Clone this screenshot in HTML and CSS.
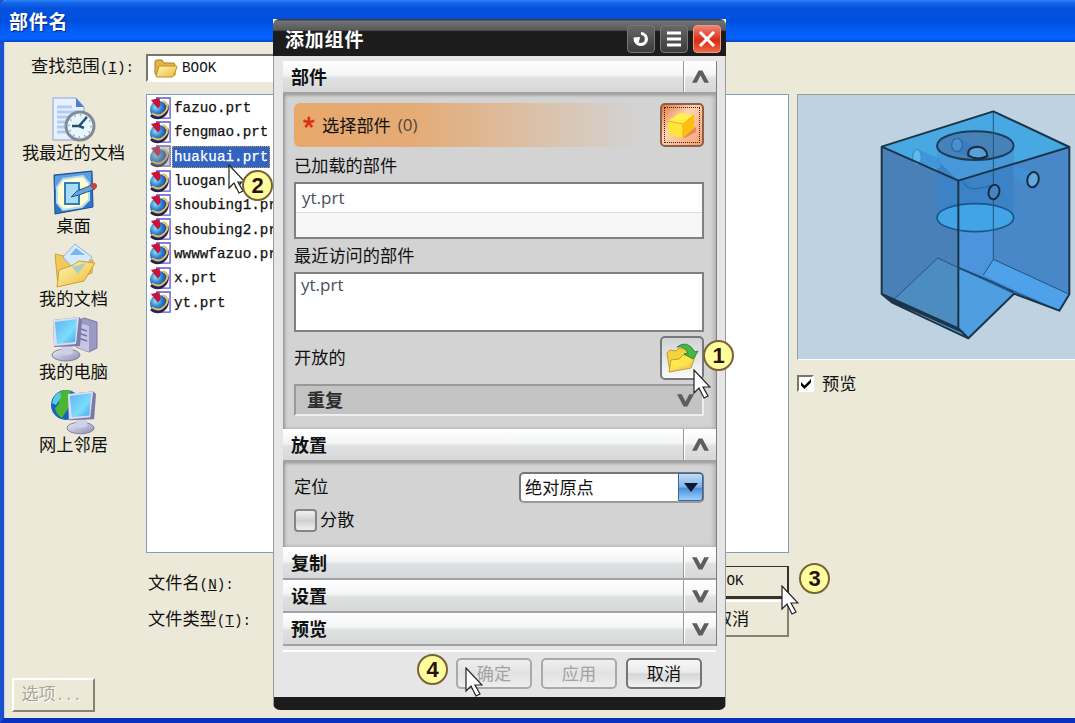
FILE: index.html
```html
<!DOCTYPE html>
<html lang="zh-CN">
<head>
    <meta charset="UTF-8">
    <meta name="viewport" content="width=device-width, initial-scale=1.0">
    <title>部件名</title>
    <link rel="stylesheet" href="styles.css">
</head>
<body>

    <!-- Shared symbols -->
    <svg class="defs" width="0" height="0">
        <defs>
            <radialGradient id="ball" cx=".35" cy=".35" r=".75">
                <stop offset="0" stop-color="#9ae8ff"/>
                <stop offset=".45" stop-color="#2a86d0"/>
                <stop offset="1" stop-color="#10246c"/>
            </radialGradient>
            <linearGradient id="folder" x1="0" y1="0" x2="1" y2="1">
                <stop offset="0" stop-color="#fff6b0"/>
                <stop offset="1" stop-color="#eebb3c"/>
            </linearGradient>
            <linearGradient id="screen" x1="0" y1="0" x2="1" y2="1">
                <stop offset="0" stop-color="#5ab4f4"/>
                <stop offset=".6" stop-color="#7ddcfc"/>
                <stop offset="1" stop-color="#3f9fe6"/>
            </linearGradient>
            <linearGradient id="metal" x1="0" y1="0" x2="1" y2="1">
                <stop offset="0" stop-color="#f0f0fa"/>
                <stop offset="1" stop-color="#8a8ab4"/>
            </linearGradient>
            <symbol id="prt" viewBox="0 0 24 24">
                <path d="M8 1h14v21H8z" fill="#fff" stroke="#5b55d8" stroke-width="1.4"/>
                <circle cx="10" cy="13" r="9" fill="url(#ball)"/>
                <path d="M2 19c4 4 10 4 14 0 3-3 4-7 3-11" fill="none" stroke="#25234a" stroke-width="2.500"/>
                <path d="M3 17c5 3 9 3 12 0 4-3 5-7 3-11l-4-2" fill="none" stroke="#eebc5c" stroke-width="2"/>
                <path d="M2 3l9-2 1 8-3 3z" fill="#c8143c"/>
            </symbol>
            <symbol id="cursor" viewBox="0 0 18 30">
                <path d="M1 1v23l5-5 5 10 4-2-5-9h7z" fill="#fff" stroke="#222" stroke-width="1.200"/>
            </symbol>
            <symbol id="monitor" viewBox="0 0 32 46">
                <ellipse cx="15" cy="39" rx="14" ry="6" fill="url(#metal)" stroke="#8080a4"/>
                <path d="M11 26h10l1 11q-6 4-12 0z" fill="#cfcfe8"/>
                <path d="M2 4l26-3 3 3-2 26-26 1z" fill="#7b7ba8"/>
                <path d="M2 4l26-3-3 27-22 2z" fill="#dcdcf0"/>
                <path d="M4 6l22-3-2 23-18 2z" fill="url(#screen)"/>
            </symbol>
        </defs>
    </svg>

    <!-- File open window -->
    <div class="window">
        <div class="window-title">部件名</div>
        <div class="client">
            <div class="lookup">
                <label>查找范围<span class="mono">(<u>I</u>):</span></label>
                <div class="lookup-combo">
                    <svg width="24" height="20" viewBox="0 0 24 20">
                        <path d="M1 4q0-2 2-2h5l2 3h9q2 0 2 2v10H3q-2 0-2-2z" fill="#e6b344" stroke="#a8801c"/>
                        <path d="M5 8h17q1 0 1 1l-3 8q-1 2-2 2H3q-1 0-1-1z" fill="url(#folder)" stroke="#b98f28"/>
                    </svg>
                    <span class="mono">BOOK</span>
                </div>
            </div>

            <div class="main">
                <div class="places">
                    <div class="place">
                        <svg width="48" height="46" viewBox="0 0 48 46">
                            <path d="M3 1h23l8 9v33H3z" fill="#e6f0ff" stroke="#8ba4cc"/>
                            <path d="M26 1v9h8z" fill="#4c7ed6"/>
                            <path d="M7 10h15M7 15h20M7 20h15M7 25h10M7 30h10M7 35h14" stroke="#b4ccf0" stroke-width="3"/>
                            <circle cx="30" cy="29" r="14" fill="#e6f6fc" stroke="#828a94" stroke-width="3"/>
                            <circle cx="30" cy="29" r="11" fill="none" stroke="#9cb8cc" stroke-width="2" stroke-dasharray="1.5 4.2"/>
                            <path d="M37 20l-8 9h-7M29 29l5 2" fill="none" stroke="#26506c" stroke-width="2.500"/>
                        </svg>
                        <span>我最近的文档</span>
                    </div>
                    <div class="place">
                        <svg width="48" height="46" viewBox="0 0 48 46">
                            <path d="M4 5l38-4 1 36-38 7z" fill="#2c76c8" stroke="#1c4c92"/>
                            <path d="M5 6l36-4v12L5 19z" fill="#7dbcf2" opacity=".6"/>
                            <path d="M13 9l20-3 6 7v17l-7 7-19 3-6-7V17z" fill="#fffdd2" stroke="#b8dce8" stroke-width="2"/>
                            <path d="M15 13h14v21H15z" fill="#a8dcf6" stroke="#357cb8" stroke-width="2"/>
                            <path d="M21 27l6-6 15-6 3 4-16 6z" fill="#66a6dc" stroke="#24558e"/>
                            <circle cx="44" cy="16" r="3" fill="#c84434"/>
                        </svg>
                        <span>桌面</span>
                    </div>
                    <div class="place">
                        <svg width="48" height="46" viewBox="0 0 48 46">
                            <path d="M5 11l9 2 12 5 17-1-1 13L8 43z" fill="#f0c85c" stroke="#d0a23c"/>
                            <path d="M13 14L25 1l17 13-13 18z" fill="#d4eaff" stroke="#8fb2dc"/>
                            <path d="M20 12l6-7 9 7z" fill="#7cb6ee"/>
                            <path d="M7 44l2-17 14-5 6-4 16 2-11 18z" fill="url(#folder)" stroke="#ce9e34"/>
                            <path d="M22 24l14-4-8 11z" fill="#96ccdc" opacity=".8"/>
                        </svg>
                        <span>我的文档</span>
                    </div>
                    <div class="place">
                        <svg width="48" height="46" viewBox="0 0 48 46">
                            <path d="M26 6l8-4 13 4v26l-8 4-13-5z" fill="#9a9ac4" stroke="#7878a4"/>
                            <path d="M26 6l13 4v26l-13-5z" fill="#c6c6e2"/>
                            <path d="M28 12l9 3M28 17l9 3M28 22l9 3" stroke="#7676a0" stroke-width="1.500"/>
                            <use href="#monitor" x="1" y="0" width="32" height="46"/>
                        </svg>
                        <span>我的电脑</span>
                    </div>
                    <div class="place">
                        <svg width="48" height="46" viewBox="0 0 48 46">
                            <circle cx="16" cy="16" r="15" fill="#1c62bc"/>
                            <path d="M7 5q8-6 14-3l-3 6 4 5-5 8-5 8q-6-4-7-10l4-4z" fill="#4cb634"/>
                            <path d="M2 14q2-9 8-11l1 5-5 8z" fill="#57cce4"/>
                            <use href="#monitor" x="16" y="1" width="31" height="45"/>
                        </svg>
                        <span>网上邻居</span>
                    </div>
                </div>

                <div class="file-list mono">
                    <div class="file"><svg><use href="#prt"/></svg><span>fazuo.prt</span></div>
                    <div class="file"><svg><use href="#prt"/></svg><span>fengmao.prt</span></div>
                    <div class="file selected"><svg><use href="#prt"/></svg><span>huakuai.prt</span></div>
                    <div class="file"><svg><use href="#prt"/></svg><span>luogan.prt</span></div>
                    <div class="file"><svg><use href="#prt"/></svg><span>shoubing1.prt</span></div>
                    <div class="file"><svg><use href="#prt"/></svg><span>shoubing2.prt</span></div>
                    <div class="file"><svg><use href="#prt"/></svg><span>wwwwfazuo.prt</span></div>
                    <div class="file"><svg><use href="#prt"/></svg><span>x.prt</span></div>
                    <div class="file"><svg><use href="#prt"/></svg><span>yt.prt</span></div>
                </div>

                <div class="preview">
                    <div class="preview-box">
                        <svg width="278" height="264" viewBox="0 0 278 264">
                            <g transform="translate(62 -10) scale(.33333)" stroke-linejoin="round">
                                <!-- block faces -->
                                <path d="M65 185L295 287 628 186V628L598 677 462 626 325 760 65 627z" fill="#4a8fd6"/>
                                <path d="M65 185L295 287V730L65 627z" fill="#4a80b8"/>
                                <path d="M295 287L628 186V628L400 523 370 570 295 548z" fill="#4888c8"/>
                                <path d="M295 290L400 260V523L370 570 295 545z" fill="#4c94dc"/>
                                <path d="M65 185L400 79 628 186 295 287z" fill="#48a8e2"/>
                                <path d="M233 519L462 626 325 760 100 645z" fill="#4e9ee0"/>
                                <path d="M233 519L295 545V730L100 645z" fill="#4c8cc0"/>
                                <path d="M400 523L628 628 598 677 370 570z" fill="#4ea2ea"/>
                                <!-- bore -->
                                <path d="M231 185V398H461V185z" fill="#3c82c6"/>
                                <path d="M231 225L295 287 461 237V185H231z" fill="#4698d8"/>
                                <ellipse cx="346" cy="182" rx="115" ry="43" fill="#4681b8" stroke="#1c3c5c" stroke-width="6"/>
                                <ellipse cx="346" cy="398" rx="115" ry="42" fill="#40a4e6" stroke="#1c5688" stroke-width="5"/>
                                <path d="M400 79V523L370 570M400 523L628 628M100 645L233 519 462 626" fill="none" stroke="#20527e" stroke-width="3"/>
                                <path d="M295 548L598 677" stroke="#20527e" stroke-width="3"/>
                                <!-- side holes -->
                                <path d="M172 193L240 222V250L168 238z" fill="#3f96da"/>
                                <ellipse cx="171" cy="216" rx="13" ry="23" fill="#62b8e8" stroke="#3a90cc" stroke-width="4"/>
                                <path d="M292 158L355 188 325 212 285 200z" fill="#397cc0"/>
                                <ellipse cx="291" cy="180" rx="16" ry="20" fill="#4a90d0" stroke="#2a6cac" stroke-width="4"/>
                                <path d="M325 212q-5-25 28-27 28 3 29 28-28 15-57-1z" fill="#58a0d6" stroke="#1a2c3c" stroke-width="6"/>
                                <path d="M310 290q10 26 48 20l42-10" fill="none" stroke="#2a6eb0" stroke-width="4"/>
                                <path d="M461 245L520 262 508 300 461 276z" fill="#4090d4"/>
                                <ellipse cx="402" cy="321" rx="16" ry="22" fill="#4684c0" stroke="#182c40" stroke-width="6" transform="rotate(14 402 321)"/>
                                <ellipse cx="519" cy="284" rx="17" ry="23" fill="#62aade" stroke="#182c40" stroke-width="6" transform="rotate(14 519 284)"/>
                                <!-- outline -->
                                <path d="M65 185L400 79 628 186 295 287zM65 185V627L295 730V287M628 186V628L598 677 462 626 325 760 295 730M65 627L95 652 325 760M80 640L310 742" fill="none" stroke="#1c3448" stroke-width="6"/>
                                <path d="M295 548L400 592 462 622" fill="none" stroke="#1c4870" stroke-width="5"/>
                            </g>
                        </svg>
                    </div>
                    <label class="preview-check">
                        <span class="classic-check">
                            <svg width="12" height="12" viewBox="0 0 12 12"><path d="M1 4l3.500 3.500L11 1v3.500L4.500 11 1 7.500z" fill="#000"/></svg>
                        </span>
                        预览
                    </label>
                </div>
            </div>

            <div class="bottom">
                <div class="fields">
                    <label>文件名<span class="mono">(<u>N</u>):</span></label>
                    <label>文件类型<span class="mono">(<u>T</u>):</span></label>
                </div>
                <div class="actions">
                    <button class="classic default mono">OK</button>
                    <button class="classic">取消</button>
                </div>
            </div>
            <button class="classic options" disabled>选项<span class="mono">...</span></button>
        </div>
    </div>

    <!-- Add component dialog -->
    <div class="dialog-corners"></div>
    <div class="dialog">
        <div class="dialog-title">
            <span>添加组件</span>
            <div class="title-buttons">
                <i><svg width="20" height="20" viewBox="0 0 20 20"><path d="M10 4.500a5.500 5.500 0 1 1-5.500 6.500" fill="none" stroke="#fff" stroke-width="3.200"/><path d="M2.500 8.500l6.500-.5-1 5H3z" fill="#fff"/></svg></i>
                <i><svg width="20" height="20" viewBox="0 0 20 20"><path d="M3 4h14M3 10h14M3 16h14" stroke="#fff" stroke-width="3"/></svg></i>
                <i class="close"><svg width="20" height="20" viewBox="0 0 20 20"><path d="M3 3l14 14M17 3L3 17" stroke="#fff" stroke-width="3"/></svg></i>
            </div>
        </div>

        <div class="sections">
            <div class="section-head"><span>部件</span><b><svg class="chev" viewBox="0 0 18 14"><path d="M0 13L7 0h4l7 13h-5L9 5.500 5 13z"/></svg></b></div>
            <div class="section-body parts">
                <div class="select-row">
                    <div class="select-label"><em>*</em>选择部件<span class="latin">(0)</span></div>
                    <div class="tool active">
                        <svg width="34" height="34" viewBox="0 0 34 34">
                            <path d="M17 27l14-8v5l-11 6z" fill="#d8642c" opacity=".55"/>
                            <path d="M3 13l15 3v14L4 27z" fill="#ffe43c"/>
                            <path d="M3 13L15 5l14 2-11 9z" fill="#fff04c"/>
                            <path d="M18 16l11-9v13L18 30z" fill="#ffbe10"/>
                            <path d="M3 13l15 3 11-9M18 16v14" fill="none" stroke="#f6ae14"/>
                        </svg>
                    </div>
                </div>
                <div class="label loaded-label">已加载的部件</div>
                <div class="list-box loaded latin"><div>yt.prt</div></div>
                <div class="label recent-label">最近访问的部件</div>
                <div class="list-box recent latin">yt.prt</div>
                <div class="open-row">
                    <span>开放的</span>
                    <div class="tool">
                        <svg width="34" height="34" viewBox="0 0 34 34">
                            <path d="M2 12l3-3 6 1 3-3 14 3-2 14L5 31z" fill="#f2d33a" stroke="#c69a20"/>
                            <path d="M4 31l2-12 8-1 4-4 13-1-5 14z" fill="url(#folder)" stroke="#c8a018"/>
                            <path d="M5 28l3-8 7-1 4-4 10-1-5 10z" fill="#ffe838" opacity=".8"/>
                            <path d="M12 6q10-8 18 5l3-1-5 8-9-5 4-1q-4-8-11-6z" fill="#46b848" stroke="#2c8a38"/>
                        </svg>
                    </div>
                </div>
                <div class="repeat"><span>重复</span><svg class="chev" viewBox="0 0 18 14"><path d="M0 1l7 13h4l7-13h-5L9 8.500 5 1z"/></svg></div>
            </div>

            <div class="section-head"><span>放置</span><b><svg class="chev" viewBox="0 0 18 14"><path d="M0 13L7 0h4l7 13h-5L9 5.500 5 13z"/></svg></b></div>
            <div class="section-body placement">
                <div class="position-row">
                    <span>定位</span>
                    <div class="combo">
                        <span>绝对原点</span>
                        <i><svg width="14" height="9" viewBox="0 0 14 9"><path d="M0 0h14L7 9z" fill="#0c1830"/></svg></i>
                    </div>
                </div>
                <div class="scatter"><i></i><span>分散</span></div>
            </div>

            <div class="section-head"><span>复制</span><b><svg class="chev" viewBox="0 0 18 14"><path d="M0 1l7 13h4l7-13h-5L9 8.500 5 1z"/></svg></b></div>
            <div class="section-head"><span>设置</span><b><svg class="chev" viewBox="0 0 18 14"><path d="M0 1l7 13h4l7-13h-5L9 8.500 5 1z"/></svg></b></div>
            <div class="section-head"><span>预览</span><b><svg class="chev" viewBox="0 0 18 14"><path d="M0 1l7 13h4l7-13h-5L9 8.500 5 1z"/></svg></b></div>
        </div>

        <div class="dialog-footer">
            <button class="nx" disabled>确定</button>
            <button class="nx" disabled>应用</button>
            <button class="nx">取消</button>
        </div>
    </div>

    <!-- Step markers and pointers -->
    <svg class="pointer p1"><use href="#cursor"/></svg>
    <svg class="pointer p2"><use href="#cursor"/></svg>
    <svg class="pointer p3"><use href="#cursor"/></svg>
    <svg class="pointer p4"><use href="#cursor"/></svg>
    <div class="step s1">1</div>
    <div class="step s2">2</div>
    <div class="step s3">3</div>
    <div class="step s4">4</div>

</body>
</html>
```
FILE: styles.css
```css
* {
    box-sizing: border-box;
}
body {
    margin: 0;
    width: 1075px;
    height: 723px;
    overflow: hidden;
    position: relative;
    font-family: "Noto Sans CJK SC", sans-serif;
    font-size: 17.2px;
    line-height: 20px;
    color: #111;
}
svg {
    display: block;
    flex: none;
}
button {
    font-family: inherit;
    font-size: inherit;
    line-height: inherit;
    color: inherit;
    padding: 0 0 2px;
}
.defs {
    position: absolute;
}
.mono {
    font-family: "Liberation Mono", "Noto Sans CJK SC", monospace;
    font-size: 14.3px;
}
.latin {
    font-family: "Open Sans", "Noto Sans CJK SC", sans-serif;
    font-size: 17px;
}

/* File open window */
.window {
    height: 723px;
    display: flex;
    flex-direction: column;
    background: #ece9d8;
    border-left: 4px solid #1c50cc;
    border-bottom: 5px solid #0831c0;
}
.window-title {
    height: 42px;
    margin-left: -4px;
    padding: 11px 0 0 9px;
    background: linear-gradient(#2f86f4 0, #1668ec 6%, #0452dc 20%, #0050e0 50%, #0560fa 80%, #0660fc 92%, #0048c8 100%);
    border-radius: 6px 0 0 0;
    color: #fff;
    font-size: 19px;
    font-weight: bold;
    letter-spacing: .8px;
    text-shadow: 1px 1px 1px #0a2a80;
}
.client {
    flex: 1;
    display: flex;
    flex-direction: column;
    border-left: 1px solid #b9d2f2;
}
.lookup {
    height: 52px;
    display: flex;
    align-items: flex-start;
    padding-top: 12px;
}
.lookup label {
    width: 141px;
    padding: 1px 0 0 26px;
    white-space: nowrap;
}
.lookup-combo {
    width: 500px;
    height: 28px;
    display: flex;
    align-items: center;
    gap: 4px;
    padding-left: 6px;
    background: #fff;
    border: 2px solid;
    border-color: #77766c #fff #fff #77766c;
}
.main {
    height: 459px;
    display: flex;
}
.places {
    flex: none;
    width: 141px;
    padding: 3px 4px 0 0;
}
.place {
    height: 73px;
    display: flex;
    flex-direction: column;
    align-items: center;
}
.place span {
    margin-top: -1px;
    white-space: nowrap;
}
.file-list {
    flex: none;
    width: 643px;
    padding: 1px 2px;
    background: #fff;
    border: 1px solid #7f9db9;
}
.file {
    height: 24.3px;
    display: flex;
    align-items: center;
}
.file svg {
    width: 23px;
    height: 23px;
}
.file span {
    padding: 0 2px;
    line-height: 22px;
    -webkit-text-stroke: .25px;
}
.file.selected span {
    background: #3163c0;
    color: #fff;
    outline: 1px dotted #c79a50;
    outline-offset: -1px;
}
.file.selected svg {
    filter: brightness(.75);
    opacity: .75;
}
.preview {
    flex: none;
    margin-left: 8px;
    width: 282px;
}
.preview-box {
    height: 266px;
    background: #bed2e2;
    border: 1px solid #9a9c98;
    border-bottom-color: #fff;
}
.preview-check {
    display: flex;
    align-items: center;
    gap: 8px;
    margin-top: 13px;
}
.classic-check {
    width: 17px;
    height: 17px;
    padding: 2px;
    background: #fff;
    border: 2px solid;
    border-color: #77766c #fff #fff #77766c;
}
.classic-check svg {
    margin: -1px 0 0 -1px;
}
.bottom {
    display: flex;
    justify-content: space-between;
    width: 784px;
    padding-left: 143px;
}
.fields {
    display: flex;
    flex-direction: column;
    padding-top: 19px;
}
.fields label {
    height: 36px;
}
.actions {
    padding-top: 13px;
    display: flex;
    flex-direction: column;
    gap: 1px;
}
.classic {
    width: 114px;
    height: 37px;
    background: #ece9d8;
    border: 2px solid;
    border-color: #fff #85826f #85826f #fff;
}
.classic.default {
    height: 33px;
    padding-left: 6px;
    border: 2px solid #33322c;
    border-top-width: 1px;
    border-bottom-width: 3px;
}
.classic.options {
    width: 83px;
    height: 34px;
    margin: auto 0 6px 7px;
    padding-right: 4px;
    color: #aaa799;
    text-shadow: 1px 1px #fff;
}

/* Add component dialog */
.dialog-corners {
    position: absolute;
    left: 273px;
    top: 19px;
    width: 453px;
    height: 12px;
    background: #fff;
}
.dialog {
    position: absolute;
    left: 273px;
    top: 19px;
    width: 453px;
    height: 691px;
    display: flex;
    flex-direction: column;
    background: #e6e6e6;
    border: 1px solid #9a9a9a;
    border-top: 0;
    border-bottom: 13px solid #1c1c1c;
    border-radius: 7px;
}
.dialog-title {
    height: 37px;
    margin: 0 -1px;
    padding: 2px 5px 0 12px;
    display: flex;
    align-items: center;
    justify-content: space-between;
    background: linear-gradient(#2a2a2a 0, #707274 6%, #56585a 30%, #1c1c1c 34%, #1c1c1c 100%);
    border-radius: 6px 6px 0 0;
    color: #fff;
    font-size: 19px;
    font-weight: bold;
    letter-spacing: .8px;
}
.title-buttons {
    display: flex;
    gap: 5px;
}
.title-buttons i {
    width: 28px;
    height: 28px;
    display: flex;
    align-items: center;
    justify-content: center;
    background: linear-gradient(#666, #3c3c3c);
    border: 1px solid #777;
    border-radius: 4px;
}
.title-buttons .close {
    background: linear-gradient(#ec8474, #da2c14 55%, #ee6848);
    border-color: #f09888;
}
.sections {
    margin: 5px 8px 0 9px;
    border-right: 1px solid #808080;
    height: 585px;
}
.section-head {
    height: 33px;
    display: flex;
    justify-content: space-between;
    background: linear-gradient(#fff, #f4f5f5 45%, #dfe0e1 55%, #d6d8da);
    border-bottom: 2px solid #a2a2a2;
    font-size: 18px;
    font-weight: bold;
}
.section-head span {
    padding: 5px 0 0 8px;
}
.section-head b {
    width: 33px;
    height: 31px;
    display: flex;
    align-items: center;
    justify-content: center;
    border-left: 1px solid #999;
    box-shadow: inset 1px 0 #fff;
}
.chev {
    width: 17px;
    height: 14px;
    fill: #5e5e5e;
}
.section-body {
    background: #d3d3d3;
    box-shadow: inset 2px 1px 3px #989898, inset -2px 0 4px #b0b0b0;
}
.parts {
    height: 335px;
    padding: 9px 12px 0 11px;
}
.select-row {
    display: flex;
    justify-content: space-between;
    height: 44px;
}
.select-label {
    width: 345px;
    display: flex;
    align-items: center;
    padding-left: 9px;
    background: linear-gradient(90deg, #e8a86c, #e4ab76 35%, #d3d3d3);
    border-radius: 6px;
}
.select-label em {
    width: 19px;
    padding-top: 4px;
    color: #e02c10;
    font: 30px/20px "Liberation Sans", sans-serif;
    -webkit-text-stroke: .6px;
}
.select-label .latin {
    margin-left: 7px;
    color: #554638;
}
.tool {
    width: 44px;
    height: 44px;
    display: flex;
    align-items: center;
    justify-content: center;
    background: linear-gradient(#d0d2d6, #fafafa);
    border: 2px solid #77787a;
    border-radius: 5px;
}
.tool.active {
    background: linear-gradient(135deg, #e07840, #ffd4b4 40%, #f4a070);
    border-color: #8c6048;
    outline: 1px dotted #4c1c08;
    outline-offset: -5px;
}
.label {
    height: 20px;
}
.loaded-label {
    margin-top: 8px;
}
.list-box {
    background: #fff;
    border: 2px solid #808080;
    color: #48505c;
    padding-left: 5px;
}
.loaded {
    height: 57px;
    margin-top: 7px;
    padding-left: 0;
    background: #f6f6f6;
}
.loaded div {
    height: 29px;
    padding: 4px 0 0 6px;
    background: #fff;
    border-bottom: 1px solid #ddd;
}
.recent-label {
    margin-top: 6px;
}
.recent {
    height: 60px;
    margin-top: 7px;
    padding-top: 1px;
}
.open-row {
    height: 44px;
    margin-top: 4px;
    display: flex;
    align-items: center;
    justify-content: space-between;
}
.open-row span,
.position-row > span,
.scatter span,
.repeat span {
    padding-bottom: 3px;
}
.repeat {
    height: 32px;
    margin-top: 4px;
    padding: 0 8px 0 11px;
    display: flex;
    align-items: center;
    justify-content: space-between;
    background: #c3c3c3;
    border: 2px solid;
    border-color: #999 #eee #eee #999;
    font-size: 18px;
    font-weight: bold;
    color: #2c2c2c;
}
.placement {
    height: 85px;
    padding: 9px 13px 0 11px;
}
.position-row {
    height: 32px;
    display: flex;
    align-items: center;
    justify-content: space-between;
}
.combo {
    width: 185px;
    height: 31px;
    margin-right: -1px;
    display: flex;
    align-items: center;
    justify-content: space-between;
    padding-left: 4px;
    background: #fff;
    border: 2px solid #777;
    border-bottom-color: #999;
    border-radius: 5px;
}
.combo span {
    padding-bottom: 1px;
}
.combo i {
    width: 25px;
    height: 28px;
    margin-right: -1px;
    display: flex;
    align-items: center;
    justify-content: center;
    background: linear-gradient(#c2dcf6, #7fb2e6 50%, #4a90da 55%, #9cd0fa);
    border: 1px solid #3c64a0;
    border-radius: 0 3px 3px 0;
}
.scatter {
    margin-top: 6px;
    display: flex;
    align-items: center;
    gap: 3px;
}
.scatter i {
    width: 23px;
    height: 23px;
    background: linear-gradient(#f2f2f2, #cfcfcf 50%, #f0f0f0);
    border: 2px solid #848484;
    border-radius: 4px;
}
.dialog-footer {
    flex: 1;
    margin: 4px 9px 0;
    padding: 6px 14px 0 0;
    border-top: 2px solid #fff;
    display: flex;
    justify-content: flex-end;
    gap: 9px;
}
.nx {
    width: 76px;
    height: 31px;
    background: linear-gradient(#f6f6f6, #ececec 45%, #d6d6d6 52%, #f2f2f2);
    border: 2px solid #757575;
    border-radius: 5px;
    color: #111;
}
.nx:disabled {
    background: linear-gradient(#efefef, #e2e2e2 50%, #eee);
    border-color: #a9a9a9;
    color: #a2a2a2;
}

/* Step markers */
.step {
    position: absolute;
    width: 31px;
    height: 31px;
    border: 2px solid #786336;
    border-radius: 50%;
    background: radial-gradient(#ffff9c 50%, #fff0a0);
    color: #2a1010;
    font: bold 22px/27px "Liberation Sans", sans-serif;
    text-align: center;
}
.s1 { left: 703px; top: 340px; }
.s2 { left: 242px; top: 170px; }
.s3 { left: 799px; top: 563px; }
.s4 { left: 417px; top: 654px; }
.pointer {
    position: absolute;
    width: 18px;
    height: 30px;
}
.p1 { left: 693px; top: 369px; }
.p2 { left: 228px; top: 164px; }
.p3 { left: 781px; top: 585px; }
.p4 { left: 465px; top: 667px; }
```
